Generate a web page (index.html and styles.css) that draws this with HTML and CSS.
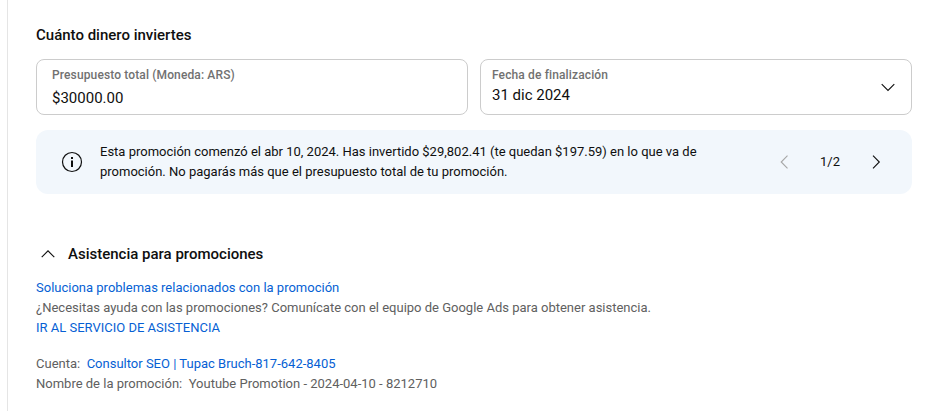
FILE: index.html
```html
<!DOCTYPE html>
<html lang="es">
<head>
<meta charset="utf-8">
<title>Cuánto dinero inviertes</title>
<link rel="stylesheet" href="styles.css">
</head>
<body>
<main class="panel">
  <h2 class="title">Cuánto dinero inviertes</h2>
  <div class="fields">
    <div class="field">
      <div class="field-label">Presupuesto total (Moneda: ARS)</div>
      <div class="field-value field-value-budget">$30000.00</div>
    </div>
    <div class="field field-select">
      <div>
        <div class="field-label">Fecha de finalización</div>
        <div class="field-value">31 dic 2024</div>
      </div>
      <svg class="chev-down" width="24" height="24" viewBox="0 0 24 24" fill="none" stroke="#0f0f0f" stroke-width="1.1"><path d="M5.7 9.1 12 15.4 18.3 9.1"/></svg>
    </div>
  </div>
  <div class="banner">
    <svg class="info" width="24" height="24" viewBox="0 0 24 24" fill="none"><circle cx="12" cy="12" r="9.5" stroke="#0f0f0f" stroke-width="1.2"/><rect x="11" y="10.5" width="2" height="6.5" fill="#0f0f0f"/><rect x="11" y="7" width="2" height="2" fill="#0f0f0f"/></svg>
    <p class="banner-text">Esta promoción comenzó el abr 10, 2024. Has invertido $29,802.41 (te quedan $197.59) en lo que va de promoción. No pagarás más que el presupuesto total de tu promoción.</p>
    <div class="pager">
      <svg width="24" height="24" viewBox="0 0 24 24" fill="none" stroke="#a6a6a6" stroke-width="1.1"><path d="M15.5 5.7 9.2 12 15.5 18.3"/></svg>
      <span class="pager-count">1/2</span>
      <svg width="24" height="24" viewBox="0 0 24 24" fill="none" stroke="#0f0f0f" stroke-width="1.1"><path d="M9 5.7 15.3 12 9 18.3"/></svg>
    </div>
  </div>
  <div class="help-head">
    <svg width="24" height="24" viewBox="0 0 24 24" fill="none" stroke="#0f0f0f" stroke-width="1.1"><path d="M5.7 15.2 12 8.9 18.3 15.2"/></svg>
    <h3 class="help-title">Asistencia para promociones</h3>
  </div>
  <div class="lines">
    <a class="link" href="#">Soluciona problemas relacionados con la promoción</a>
    <div>¿Necesitas ayuda con las promociones? Comunícate con el equipo de Google Ads para obtener asistencia.</div>
    <a class="link" href="#">IR AL SERVICIO DE ASISTENCIA</a>
  </div>
  <div class="lines lines-meta">
    <div>Cuenta:&nbsp; <a class="link" href="#">Consultor SEO | Tupac Bruch-817-642-8405</a></div>
    <div>Nombre de la promoción:&nbsp; Youtube Promotion - 2024-04-10 - 8212710</div>
  </div>
</main>
</body>
</html>
```
FILE: styles.css
```css
* { box-sizing: border-box; }
html, body { margin: 0; height: 100%; overflow: hidden; background: #fff; }
body { padding-left: 7px; font-family: Roboto, "Liberation Sans", sans-serif; color: #0f0f0f; }
.panel { height: 411px; width: 905px; border-left: 1px solid #e5e5e5; padding: 25px 0 0 28px; }
.title { margin: 0; font-size: 15px; line-height: 20px; font-weight: 500; }
.fields { display: grid; grid-template-columns: 1fr 1fr; gap: 12px; margin-top: 14px; }
.field { height: 56px; border: 1px solid #ccc; border-radius: 8px; padding: 7px 15px 0; }
.field-select { display: flex; justify-content: space-between; padding: 7px 11px 0; }
.field-select .chev-down { margin-top: 8px; }
.field-label { font-size: 12px; line-height: 16px; font-weight: 500; color: #717171; letter-spacing: .13px; }
.field-value { font-size: 15px; line-height: 22px; margin-top: 1px; }
.field-value-budget { margin-top: 4px; }
.banner { display: flex; align-items: center; height: 64px; margin-top: 15px; background: #f2f7fc; border-radius: 12px; padding: 0 24px; }
.info { flex: none; }
.banner-text { width: 620px; margin: 0 0 0 16px; font-size: 13px; line-height: 20px; }
.pager { display: flex; align-items: center; margin-left: auto; }
.pager-count { width: 68px; text-align: center; font-size: 13px; line-height: 20px; }
.help-head { display: flex; align-items: center; gap: 8px; margin-top: 48px; }
.help-head svg { flex: none; }
.help-title { margin: 0; font-size: 15px; line-height: 24px; font-weight: 500; }
.lines { margin-top: 12px; font-size: 13px; line-height: 20px; color: #606060; }
.lines-meta { margin-top: 16px; }
.lines > a { display: block; }
.link { color: #065fd4; text-decoration: none; }
```
